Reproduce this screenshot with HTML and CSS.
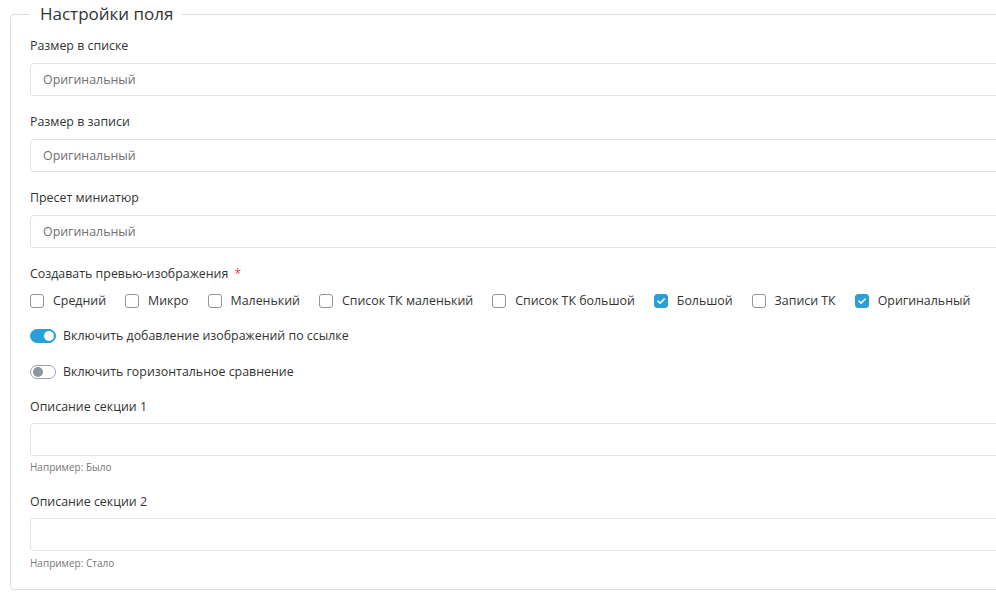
FILE: index.html
```html
<!DOCTYPE html>
<html lang="ru">
<head>
<meta charset="utf-8">
<title>Настройки поля</title>
<link rel="stylesheet" href="styles.css">
</head>
<body>
<fieldset class="panel">
  <legend class="panel-title">Настройки поля</legend>

  <div class="field">
    <label class="field-label">Размер в списке</label>
    <div class="select">Оригинальный</div>
  </div>

  <div class="field">
    <label class="field-label">Размер в записи</label>
    <div class="select">Оригинальный</div>
  </div>

  <div class="field">
    <label class="field-label">Пресет миниатюр</label>
    <div class="select">Оригинальный</div>
  </div>

  <div class="field field-checks">
    <label class="field-label">Создавать превью-изображения <span class="req">*</span></label>
    <div class="checks">
      <label class="check"><span class="box"></span>Средний</label>
      <label class="check"><span class="box"></span>Микро</label>
      <label class="check"><span class="box"></span>Маленький</label>
      <label class="check"><span class="box"></span>Список ТК маленький</label>
      <label class="check"><span class="box"></span>Список ТК большой</label>
      <label class="check"><span class="box checked"><svg viewBox="0 0 14 14" width="14" height="14"><path d="M4 7.2 L6.1 9.2 L10.2 5" fill="none" stroke="#fff" stroke-width="1.6" stroke-linecap="round" stroke-linejoin="round"/></svg></span>Большой</label>
      <label class="check"><span class="box"></span>Записи ТК</label>
      <label class="check"><span class="box checked"><svg viewBox="0 0 14 14" width="14" height="14"><path d="M4 7.2 L6.1 9.2 L10.2 5" fill="none" stroke="#fff" stroke-width="1.6" stroke-linecap="round" stroke-linejoin="round"/></svg></span>Оригинальный</label>
    </div>
  </div>

  <div class="switch-row">
    <span class="switch on"><span class="knob"></span></span>
    <span class="switch-text">Включить добавление изображений по ссылке</span>
  </div>

  <div class="switch-row">
    <span class="switch"><span class="knob"></span></span>
    <span class="switch-text">Включить горизонтальное сравнение</span>
  </div>

  <div class="field field-hinted">
    <label class="field-label">Описание секции 1</label>
    <div class="input"></div>
    <div class="hint">Например: Было</div>
  </div>

  <div class="field field-hinted">
    <label class="field-label">Описание секции 2</label>
    <div class="input"></div>
    <div class="hint">Например: Стало</div>
  </div>
</fieldset>
</body>
</html>
```

FILE: styles.css
```css
html, body {
  margin: 0;
  padding: 0;
  background: #fff;
  overflow: hidden;
}
body {
  font-family: "Open Sans", "Noto Sans", sans-serif;
  font-size: 12.4px;
  color: #333;
  width: 996px;
  height: 596px;
}
.panel {
  margin: 4px 0 0 10px;
  width: 1100px;
  box-sizing: border-box;
  border: 1px solid #dcdcdc;
  border-radius: 4px;
  padding: 0 19px 19px;
}
.panel-title {
  padding: 0 9px 0 10px;
  font-size: 17px;
  line-height: 20px;
  color: #333;
}
.field {
  margin-top: 13px;
}
.field + .field {
  margin-top: 17px;
}
.field-label {
  display: block;
  line-height: 18px;
  margin-bottom: 8px;
}
.req {
  color: #e0405a;
  margin-left: 3px;
  font-size: 12px;
}
.select, .input {
  height: 33px;
  box-sizing: border-box;
  border: 1px solid #e2e2e2;
  border-radius: 4px;
  padding: 0 12px;
  display: flex;
  align-items: center;
  color: #6f6f6f;
}
.field-checks .field-label {
  margin-bottom: 9px;
}
.checks {
  display: flex;
  gap: 19px;
  line-height: 18px;
}
.check {
  display: flex;
  align-items: center;
  gap: 9px;
  white-space: nowrap;
}
.box {
  width: 14px;
  height: 14px;
  box-sizing: border-box;
  border: 1px solid #8d959d;
  border-radius: 3px;
  display: block;
  flex: none;
}
.box.checked {
  background: #2a9fd8;
  border-color: #2a9fd8;
}
.box.checked svg {
  display: block;
  margin: -1px;
}
.switch-row {
  display: flex;
  align-items: center;
  gap: 7px;
  line-height: 18px;
  margin-top: 17px;
}
.switch-row + .switch-row {
  margin-top: 18px;
}
.switch {
  width: 26px;
  height: 14px;
  box-sizing: border-box;
  border: 1px solid #9aa2aa;
  border-radius: 7px;
  display: flex;
  align-items: center;
  padding: 0 2px;
  flex: none;
}
.switch .knob {
  width: 10px;
  height: 10px;
  border-radius: 50%;
  background: #8d959d;
}
.switch.on {
  background: #2a9fd8;
  border-color: #2a9fd8;
  justify-content: flex-end;
  padding: 0 1px;
}
.switch.on .knob {
  background: #fff;
}
.switch-row + .field {
  margin-top: 17px;
}
.field-hinted .field-label {
  margin-bottom: 7px;
}
.field-hinted + .field-hinted {
  margin-top: 19px;
}
.hint {
  font-size: 10px;
  line-height: 14px;
  margin-top: 4px;
  color: #777;
}
.field-hinted:last-child .hint {
  margin-top: 5px;
}
```
